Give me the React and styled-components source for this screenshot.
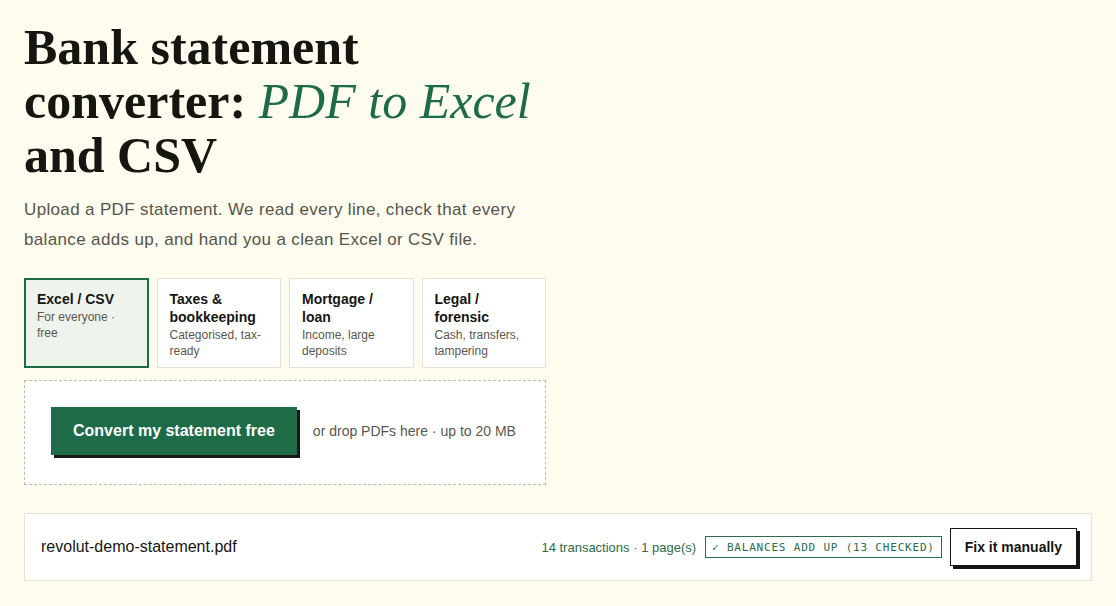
import React, { useState } from "react";
import styled, { createGlobalStyle } from "styled-components";

const GlobalStyle = createGlobalStyle`
  * {
    box-sizing: border-box;
  }
  body {
    margin: 0;
    background: #fdfcef;
    color: #161511;
    font-family: "Liberation Sans", Arial, sans-serif;
  }
`;

const Page = styled.main`
  padding: 20px 24px 24px;
`;

const Hero = styled.section`
  max-width: 522px;
`;

const Title = styled.h1`
  margin: 0;
  font-family: "Liberation Serif", "DejaVu Serif", serif;
  font-size: 50px;
  font-weight: 700;
  line-height: 54px;
  color: #161511;
`;

const TitleLine = styled.span`
  display: block;
  white-space: nowrap;
`;

const Accent = styled.em`
  color: #1e6b47;
  font-weight: 400;
`;

const Lead = styled.p`
  margin: 13px 0 0;
  font-size: 17px;
  line-height: 30px;
  letter-spacing: 0.35px;
  color: #57544b;
`;

const Modes = styled.div`
  margin-top: 23px;
  display: grid;
  grid-template-columns: repeat(4, 1fr);
  gap: 8px;
`;

const Mode = styled.button`
  height: 90px;
  padding: ${(p) => (p.$active ? "10px 11px" : "11px 12px")};
  text-align: left;
  display: flex;
  flex-direction: column;
  align-items: flex-start;
  justify-content: flex-start;
  font-family: inherit;
  cursor: pointer;
  background: ${(p) => (p.$active ? "#eef3ec" : "#ffffff")};
  border: ${(p) => (p.$active ? "2px solid #1e6b47" : "1px solid #e6e3d5")};
`;

const ModeName = styled.span`
  font-size: 14px;
  font-weight: 700;
  line-height: 18px;
  color: #161511;
`;

const ModeNote = styled.span`
  margin-top: 1px;
  font-size: 12px;
  line-height: 16px;
  color: #5a574e;
`;

const Drop = styled.div`
  margin-top: 12px;
  padding: 26px 26px 29px;
  display: flex;
  align-items: center;
  gap: 16px;
  background: #ffffff;
  border: 1px dashed #bdbab0;
`;

const PrimaryButton = styled.button`
  height: 48px;
  padding: 0 22px;
  font-family: inherit;
  font-size: 16px;
  font-weight: 700;
  color: #ffffff;
  background: #1e6b47;
  border: none;
  box-shadow: 3px 3px 0 #1a1814;
  cursor: pointer;
`;

const DropHint = styled.span`
  font-size: 14px;
  color: #5a574e;
`;

const ResultBar = styled.div`
  margin-top: 28px;
  height: 68px;
  padding: 0 14px 0 16px;
  display: flex;
  align-items: center;
  background: #ffffff;
  border: 1px solid #e6e3d5;
`;

const FileName = styled.span`
  flex: 1;
  font-size: 16px;
  color: #161511;
`;

const Stats = styled.span`
  font-size: 13px;
  color: #2c6b4c;
`;

const Badge = styled.span`
  margin-left: 9px;
  height: 22px;
  padding: 0 6px;
  display: inline-flex;
  align-items: center;
  font-family: "DejaVu Sans Mono", "Liberation Mono", monospace;
  font-size: 11px;
  letter-spacing: 0.8px;
  color: #2c6b4c;
  border: 1.5px solid #2c6b4c;
`;

const GhostButton = styled.button`
  margin-left: 8px;
  height: 38px;
  padding: 0 14px;
  font-family: inherit;
  font-size: 14px;
  font-weight: 700;
  color: #161511;
  background: #ffffff;
  border: 1.5px solid #161511;
  box-shadow: 3px 3px 0 #161511;
  cursor: pointer;
`;

const modes = [
  { name: "Excel / CSV", note: "For everyone · free" },
  { name: "Taxes & bookkeeping", note: "Categorised, tax-ready" },
  { name: "Mortgage / loan", note: "Income, large deposits" },
  { name: "Legal / forensic", note: "Cash, transfers, tampering" },
];

const App = () => {
  const [mode, setMode] = useState(0);

  return (
    <Page>
      <GlobalStyle />
      <Hero>
        <Title>
          <TitleLine>Bank statement</TitleLine>
          <TitleLine>
            converter: <Accent>PDF to Excel</Accent>
          </TitleLine>
          <TitleLine>and CSV</TitleLine>
        </Title>
        <Lead>
          Upload a PDF statement. We read every line, check that every
          balance adds up, and hand you a clean Excel or CSV file.
        </Lead>
        <Modes>
          {modes.map((m, i) => (
            <Mode key={m.name} $active={mode === i} onClick={() => setMode(i)}>
              <ModeName>{m.name}</ModeName>
              <ModeNote>{m.note}</ModeNote>
            </Mode>
          ))}
        </Modes>
        <Drop>
          <PrimaryButton>Convert my statement free</PrimaryButton>
          <DropHint>or drop PDFs here · up to 20 MB</DropHint>
        </Drop>
      </Hero>
      <ResultBar>
        <FileName>revolut-demo-statement.pdf</FileName>
        <Stats>14 transactions · 1 page(s)</Stats>
        <Badge>✓ BALANCES ADD UP (13 CHECKED)</Badge>
        <GhostButton>Fix it manually</GhostButton>
      </ResultBar>
    </Page>
  );
};

export default App;
